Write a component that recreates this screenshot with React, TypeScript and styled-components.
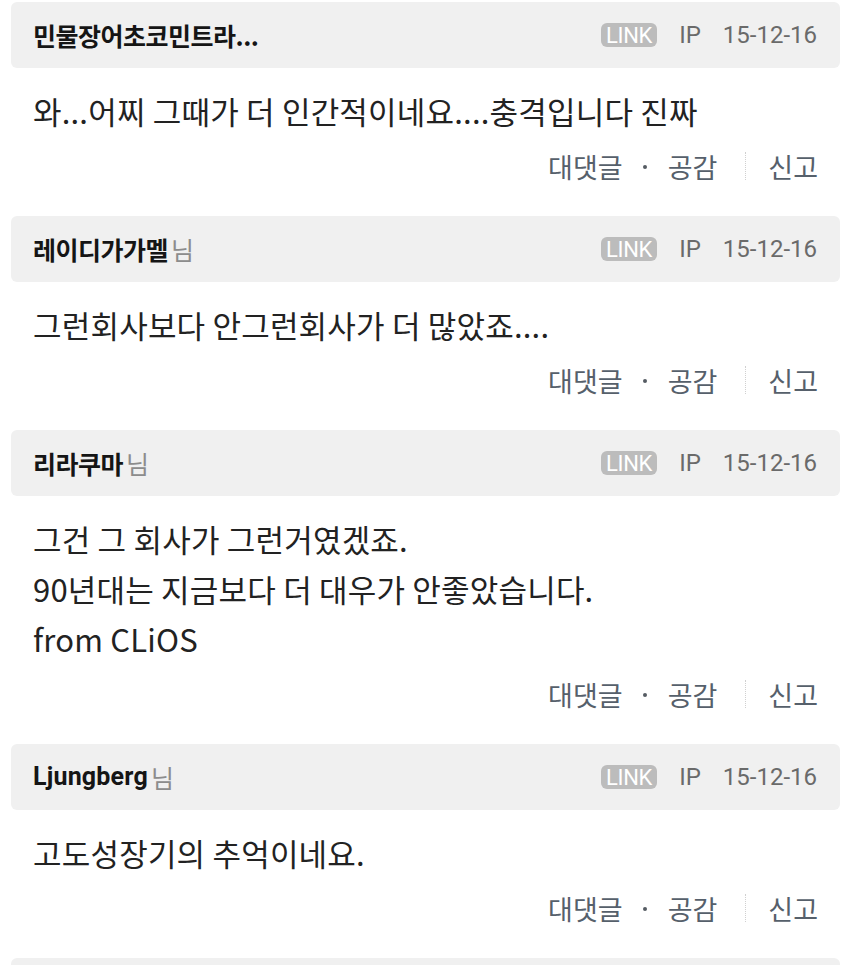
import styled, { createGlobalStyle } from 'styled-components'

const GlobalStyle = createGlobalStyle`
  html, body {
    margin: 0;
    padding: 0;
    background: #ffffff;
  }
  body {
    font-family: "Noto Sans CJK KR", "Noto Sans", sans-serif;
    -webkit-font-smoothing: antialiased;
  }
`

const List = styled.div`
  width: 850px;
  height: 965px;
  overflow: hidden;
  padding-top: 2px;
  box-sizing: border-box;
`

const Comment = styled.div`
  display: flex;
  flex-direction: column;
  padding-bottom: 30px;
`

const Header = styled.div`
  display: flex;
  flex-flow: row nowrap;
  align-items: center;
  justify-content: space-between;
  height: 66px;
  margin: 0 10px 0 11px;
  padding: 0 23px 0 22px;
  background: #f0f0f0;
  border-radius: 6px;
`

const Author = styled.div`
  display: flex;
  align-items: center;
  font-size: 25px;
  line-height: 30px;
`

const Nick = styled.span<{ $latin?: boolean }>`
  font-weight: 700;
  color: #151515;
  font-family: ${({ $latin }) => ($latin ? '"Roboto", "Noto Sans CJK KR", sans-serif' : '"Noto Sans CJK KR", sans-serif')};
  letter-spacing: ${({ $latin }) => ($latin ? '0.2px' : '-0.5px')};
`

const Honorific = styled.span`
  font-weight: 400;
  color: #8c8c8c;
  margin-left: 3px;
`

const Meta = styled.div`
  display: flex;
  align-items: center;
  gap: 22px;
  font-family: "Roboto", "Noto Sans", sans-serif;
  font-size: 24px;
  color: #6a6a6a;
`

const LinkBadge = styled.span`
  display: inline-flex;
  align-items: center;
  height: 24px;
  padding: 0 5px;
  border-radius: 6px;
  background: #bcbcbc;
  color: #ffffff;
  font-size: 22px;
  letter-spacing: -0.3px;
`

const Body = styled.div`
  padding: 18px 33px 0 33px;
  font-size: 31px;
  line-height: 50px;
  color: #222222;
  letter-spacing: 0.2px;
`

const Actions = styled.div`
  display: flex;
  flex-flow: row nowrap;
  justify-content: flex-end;
  align-items: center;
  height: 40px;
  margin-top: 10px;
  padding-right: 32px;
  font-size: 27px;
  color: #56606b;
`

const Dot = styled.span`
  width: 4px;
  height: 4px;
  border-radius: 50%;
  background: #555c63;
  margin: 2px 21px 0 20px;
`

const Divider = styled.span`
  width: 0;
  height: 28px;
  border-left: 1px dotted #d0d0d0;
  margin: 0 22px 0 28px;
`

type Item = { nick: string; latin?: boolean; honorific: boolean; lines: string[] }

const items: Item[] = [
  { nick: '민물장어초코민트라...', honorific: false, lines: ['와...어찌 그때가 더 인간적이네요....충격입니다 진짜'] },
  { nick: '레이디가가멜', honorific: true, lines: ['그런회사보다 안그런회사가 더 많았죠....'] },
  {
    nick: '리라쿠마',
    honorific: true,
    lines: ['그건 그 회사가 그런거였겠죠.', '90년대는 지금보다 더 대우가 안좋았습니다.', 'from CLiOS'],
  },
  { nick: 'Ljungberg', latin: true, honorific: true, lines: ['고도성장기의 추억이네요.'] },
  { nick: '', honorific: false, lines: [] },
]

export default function App() {
  return (
    <>
      <GlobalStyle />
      <List>
        {items.map((item, i) => (
          <Comment key={i}>
            <Header>
              <Author>
                <Nick $latin={item.latin}>{item.nick}</Nick>
                {item.honorific && <Honorific>님</Honorific>}
              </Author>
              {item.nick && (
                <Meta>
                  <LinkBadge>LINK</LinkBadge>
                  <span>IP</span>
                  <span>15-12-16</span>
                </Meta>
              )}
            </Header>
            {item.lines.length > 0 && (
              <>
                <Body>
                  {item.lines.map((line, j) => (
                    <div key={j}>{line}</div>
                  ))}
                </Body>
                <Actions>
                  <span>대댓글</span>
                  <Dot />
                  <span>공감</span>
                  <Divider />
                  <span>신고</span>
                </Actions>
              </>
            )}
          </Comment>
        ))}
      </List>
    </>
  )
}
